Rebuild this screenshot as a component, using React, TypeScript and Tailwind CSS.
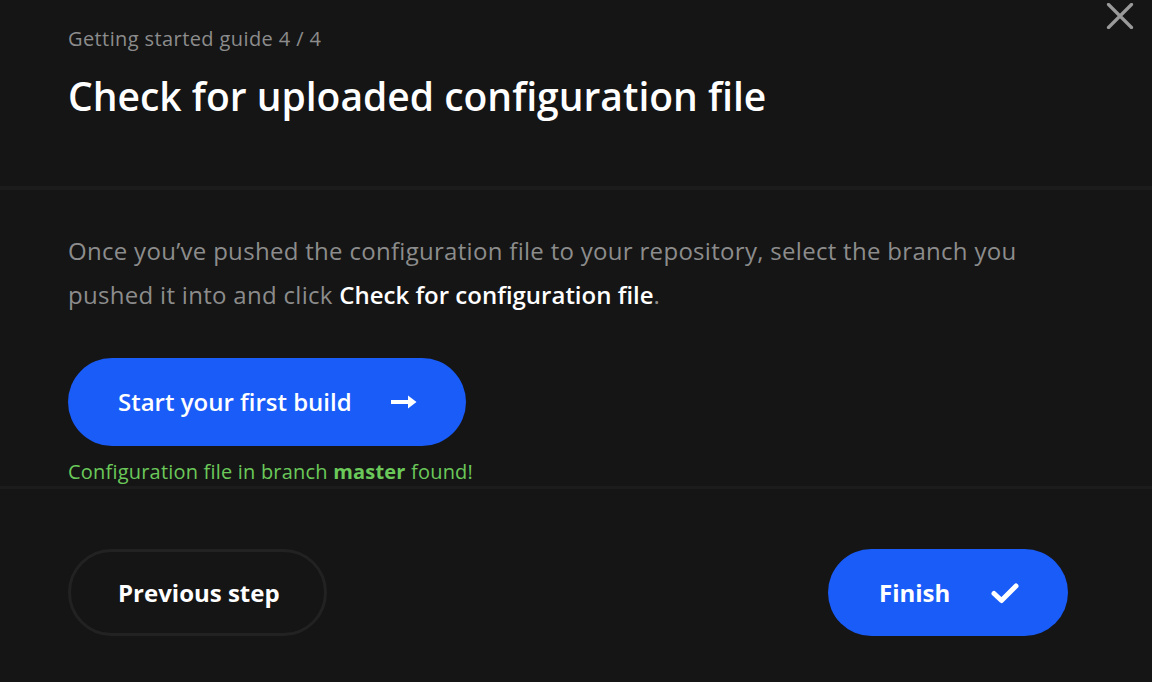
import React from "react";

export default function App() {
  const font = { fontFamily: "'Open Sans', Lato, sans-serif" };
  return (
    <div className="w-full h-[682px] bg-[#151515] relative overflow-hidden" style={font}>
      <button className="absolute left-[1106px] top-[3px] w-[28px] h-[26px] flex items-center justify-center">
        <svg width="28" height="26" viewBox="0 0 28 26">
          <path d="M2.5 1.5 L25.5 24.5 M25.5 1.5 L2.5 24.5" stroke="#9a9a9a" strokeWidth="3.2" strokeLinecap="round" />
        </svg>
      </button>

      <div className="h-[186px] px-[68px] pt-[27px]">
        <div className="text-[20px] leading-[24px] tracking-[0.4px] text-[#8c8c8c]">Getting started guide 4 / 4</div>
        <h1 className="mt-[22px] text-[39px] leading-[46px] font-semibold text-white">Check for uploaded configuration file</h1>
      </div>
      <div className="h-[4px] bg-[#1c1c1c]" />

      <div className="h-[296px] px-[68px] pt-[39px]">
        <p className="text-[24px] leading-[44px] tracking-[0.3px] text-[#8c8c8c] max-w-[1000px]">
          Once you’ve pushed the configuration file to your repository, select the branch you pushed it into and click{" "}
          <span className="font-semibold text-white tracking-normal">Check for configuration file</span>.
        </p>
        <button className="mt-[41px] h-[88px] w-[398px] rounded-full bg-[#1a5cf8] flex items-center justify-between pl-[50px] pr-[49px]">
          <span className="text-[24px] font-semibold text-white">Start your first build</span>
          <svg width="26" height="14" viewBox="0 0 26 14">
            <path d="M0 5 H17 V0.5 L25.5 7 L17 13.5 V9 H0 Z" fill="#fff" />
          </svg>
        </button>
        <div className="mt-[14px] text-[20px] leading-[24px] tracking-[0.2px] text-[#6bc95a]">
          Configuration file in branch <span className="font-bold">master</span> found!
        </div>
      </div>
      <div className="h-[3px] bg-[#1c1c1c]" />

      <div className="px-[68px] pt-[60px] flex items-start">
        <button className="h-[87px] w-[259px] rounded-full border-[3px] border-[#222222] flex items-center pl-[47px]">
          <span className="text-[24px] font-bold text-white">Previous step</span>
        </button>
        <button className="ml-auto mr-[16px] h-[87px] w-[240px] rounded-full bg-[#1a5cf8] flex items-center justify-between pl-[51px] pr-[48px]">
          <span className="text-[24px] font-bold text-white">Finish</span>
          <svg width="30" height="22" viewBox="0 0 30 22">
            <path d="M4 11.5 L11.5 18.5 L26 4" stroke="#fff" strokeWidth="5" fill="none" strokeLinecap="round" strokeLinejoin="round" />
          </svg>
        </button>
      </div>
    </div>
  );
}
